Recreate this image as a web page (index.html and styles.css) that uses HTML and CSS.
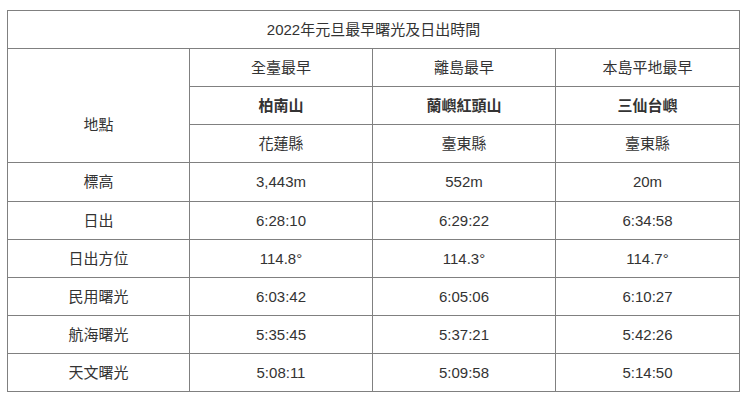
FILE: index.html
```html
<!DOCTYPE html>
<html lang="zh-Hant">
<head>
<meta charset="utf-8">
<title>2022年元旦最早曙光及日出時間</title>
<link rel="stylesheet" href="styles.css">
</head>
<body>
<table class="sun-table">
  <colgroup>
    <col class="c1"><col class="c2"><col class="c3"><col class="c4">
  </colgroup>
  <tbody>
    <tr><td colspan="4">2022年元旦最早曙光及日出時間</td></tr>
    <tr><td rowspan="3" class="place">地點</td><td>全臺最早</td><td>離島最早</td><td>本島平地最早</td></tr>
    <tr><td class="b">柏南山</td><td class="b">蘭嶼紅頭山</td><td class="b">三仙台嶼</td></tr>
    <tr><td>花蓮縣</td><td>臺東縣</td><td>臺東縣</td></tr>
    <tr class="tall"><td>標高</td><td>3,443m</td><td>552m</td><td>20m</td></tr>
    <tr><td>日出</td><td>6:28:10</td><td>6:29:22</td><td>6:34:58</td></tr>
    <tr><td>日出方位</td><td>114.8°</td><td>114.3°</td><td>114.7°</td></tr>
    <tr><td>民用曙光</td><td>6:03:42</td><td>6:05:06</td><td>6:10:27</td></tr>
    <tr><td>航海曙光</td><td>5:35:45</td><td>5:37:21</td><td>5:42:26</td></tr>
    <tr><td>天文曙光</td><td>5:08:11</td><td>5:09:58</td><td>5:14:50</td></tr>
  </tbody>
</table>
</body>
</html>
```
FILE: styles.css
```css
html, body {
  margin: 0;
  background: #fff;
}
body {
  padding: 10px 7px;
  font-family: "Liberation Sans", Arial, "Noto Sans CJK TC", sans-serif;
  font-size: 15px;
  color: #333;
}
.sun-table {
  border-collapse: collapse;
  width: 732px;
  table-layout: fixed;
}
.c1 { width: 182px; }
.c2 { width: 183px; }
.c3 { width: 183px; }
.c4 { width: 184px; }
.sun-table td {
  border: 1px solid #808080;
  height: 37px;
  padding: 0;
  text-align: center;
  vertical-align: middle;
  line-height: 20px;
}
.sun-table tr.tall td {
  height: 38px;
}
.sun-table td.place {
  padding-top: 38px;
}
.sun-table td.b {
  font-weight: bold;
}
```
